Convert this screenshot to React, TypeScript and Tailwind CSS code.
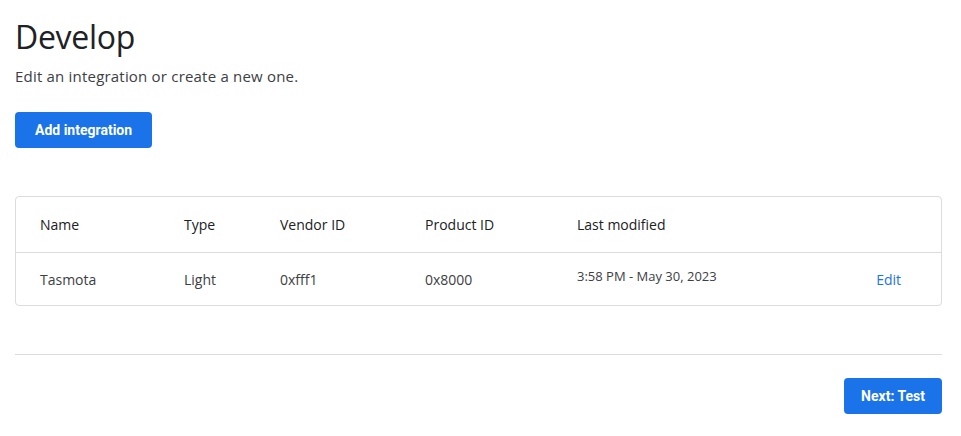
const rows = [
  { name: 'Tasmota', type: 'Light', vendor: '0xfff1', product: '0x8000', modified: '3:58 PM - May 30, 2023' },
]

const cols = 'grid grid-cols-[144px_96px_145px_152px_1fr_auto]'

export default function App() {
  return (
    <div className="min-h-screen bg-white text-[#202124] font-['Open_Sans','Liberation_Sans',sans-serif]">
      <div className="ml-[15px] w-[927px] pt-[15px]">
        <h1 className="text-[32px] leading-[44px] font-normal tracking-[-0.3px]">Develop</h1>
        <p className="mt-[6px] text-[15px] leading-[22px] text-[#3c4043] tracking-[0.2px]">Edit an integration or create a new one.</p>
        <button className="mt-[25px] h-[36px] px-[20px] rounded-[4px] bg-[#1a73e8] text-white text-[14px] font-bold font-['Roboto','Liberation_Sans',sans-serif]">
          Add integration
        </button>

        <div className="mt-[48px] border border-[#dadce0] rounded-[4px] text-[14px]">
          <div className={`${cols} h-[56px] items-center pl-[24px] pr-[40px] border-b border-[#dadce0]`}>
            <span>Name</span>
            <span>Type</span>
            <span>Vendor ID</span>
            <span>Product ID</span>
            <span>Last modified</span>
            <span />
          </div>
          {rows.map(r => (
            <div key={r.name} className={`${cols} h-[52px] items-center pl-[24px] pr-[40px] text-[#3c4043]`}>
              <span>{r.name}</span>
              <span>{r.type}</span>
              <span>{r.vendor}</span>
              <span>{r.product}</span>
              <span className="text-[13px] -mt-[5px]">{r.modified}</span>
              <span className="text-[#1a73e8]">Edit</span>
            </div>
          ))}
        </div>

        <div className="mt-[48px] border-t border-[#dadce0]" />
        <div className="flex justify-end mt-[23px]">
          <button className="h-[36px] px-[17px] rounded-[4px] bg-[#1a73e8] text-white text-[14px] font-bold font-['Roboto','Liberation_Sans',sans-serif]">
            Next: Test
          </button>
        </div>
      </div>
    </div>
  )
}
